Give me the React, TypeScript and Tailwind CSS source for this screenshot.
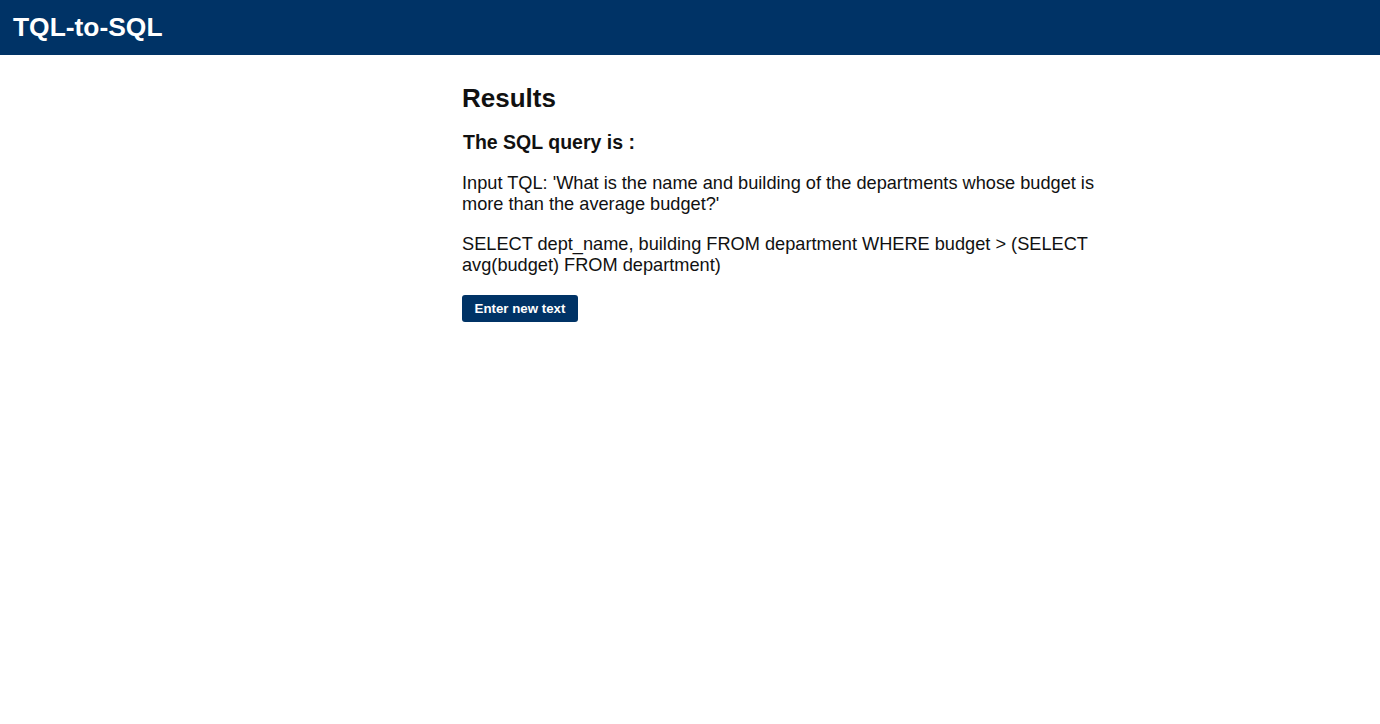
import React from "react";

export default function App() {
  return (
    <div className="min-h-screen bg-white text-[#111]" style={{ fontFamily: '"Liberation Sans", Arial, sans-serif' }}>
      <header className="h-[55px] bg-[#003366] flex items-center px-[13px]">
        <h1 className="text-[26.4px] font-bold text-white leading-none">TQL-to-SQL</h1>
      </header>
      <main className="ml-[462px] w-[650px] pt-[27px]">
        <h2 className="text-[26px] font-bold leading-[32px]">Results</h2>
        <h3 className="mt-[16px] text-[19.5px] font-bold leading-[24px] pl-[1px]">The SQL query is :</h3>
        <p className="mt-[19px] text-[18.2px] leading-[21px]">
          Input TQL: 'What is the name and building of the departments whose budget is more than the average budget?'
        </p>
        <p className="mt-[19px] text-[18.2px] leading-[21px]">
          SELECT dept_name, building FROM department WHERE budget &gt; (SELECT avg(budget) FROM department)
        </p>
        <button className="mt-[19px] h-[27px] w-[116px] rounded-[3px] bg-[#003366] text-white text-[13.3px] font-bold flex items-center justify-center">
          Enter new text
        </button>
      </main>
    </div>
  );
}
